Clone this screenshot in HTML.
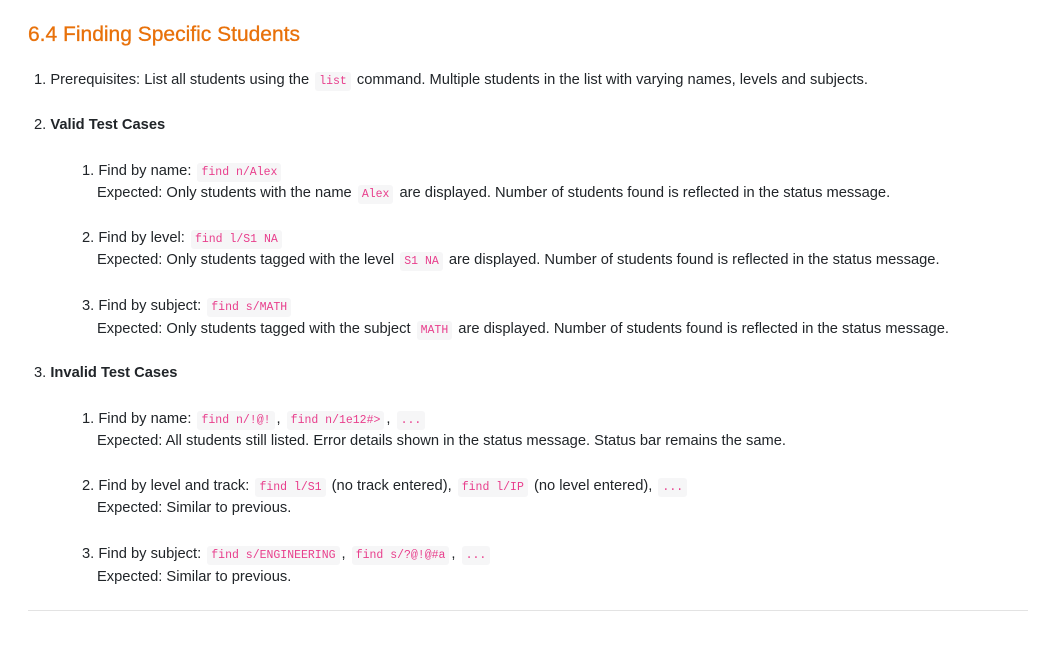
<!DOCTYPE html>
<html><head><meta charset="utf-8"><style>
body{margin:0;background:#fff;width:1047px;height:653px;position:relative;overflow:hidden;font-family:"Liberation Sans",sans-serif;font-size:14.7px;color:#212529}
.l{position:absolute;line-height:22px;white-space:nowrap;margin-top:1px}
h2{position:absolute;left:28px;top:21px;margin:0;font-size:21px;font-weight:normal;color:#e8710a;line-height:28px;-webkit-text-stroke:0.3px #e8710a}
code{font-family:"Liberation Mono",monospace;font-size:11.5px;color:#e83e8c;background:#f6f6f7;padding:3px 4px;border-radius:3px;margin:0 2px}
b{font-weight:bold}
hr{position:absolute;left:28px;top:610px;width:1000px;margin:0;border:0;border-top:1px solid #e3e3e3}
</style></head><body>
<h2>6.4 Finding Specific Students</h2>
<div class="l" style="left:34px;top:68px">1. Prerequisites: List all students using the <code>list</code> command. Multiple students in the list with varying names, levels and subjects.</div>
<div class="l" style="left:34px;top:113px">2. <b>Valid Test Cases</b></div>
<div class="l" style="left:82px;top:159px">1. Find by name: <code>find n/Alex</code></div>
<div class="l" style="left:97px;top:181px">Expected: Only students with the name <code>Alex</code> are displayed. Number of students found is reflected in the status message.</div>
<div class="l" style="left:82px;top:226px">2. Find by level: <code>find l/S1 NA</code></div>
<div class="l" style="left:97px;top:248px">Expected: Only students tagged with the level <code>S1 NA</code> are displayed. Number of students found is reflected in the status message.</div>
<div class="l" style="left:82px;top:294px">3. Find by subject: <code>find s/MATH</code></div>
<div class="l" style="left:97px;top:317px">Expected: Only students tagged with the subject <code>MATH</code> are displayed. Number of students found is reflected in the status message.</div>
<div class="l" style="left:34px;top:361px">3. <b>Invalid Test Cases</b></div>
<div class="l" style="left:82px;top:407px">1. Find by name: <code>find n/!@!</code>, <code>find n/1e12#&gt;</code>, <code>...</code></div>
<div class="l" style="left:97px;top:429px">Expected: All students still listed. Error details shown in the status message. Status bar remains the same.</div>
<div class="l" style="left:82px;top:474px">2. Find by level and track: <code>find l/S1</code> (no track entered), <code>find l/IP</code> (no level entered), <code>...</code></div>
<div class="l" style="left:97px;top:496px">Expected: Similar to previous.</div>
<div class="l" style="left:82px;top:542px">3. Find by subject: <code>find s/ENGINEERING</code>, <code>find s/?@!@#a</code>, <code>...</code></div>
<div class="l" style="left:97px;top:565px">Expected: Similar to previous.</div>
<hr>
</body></html>
